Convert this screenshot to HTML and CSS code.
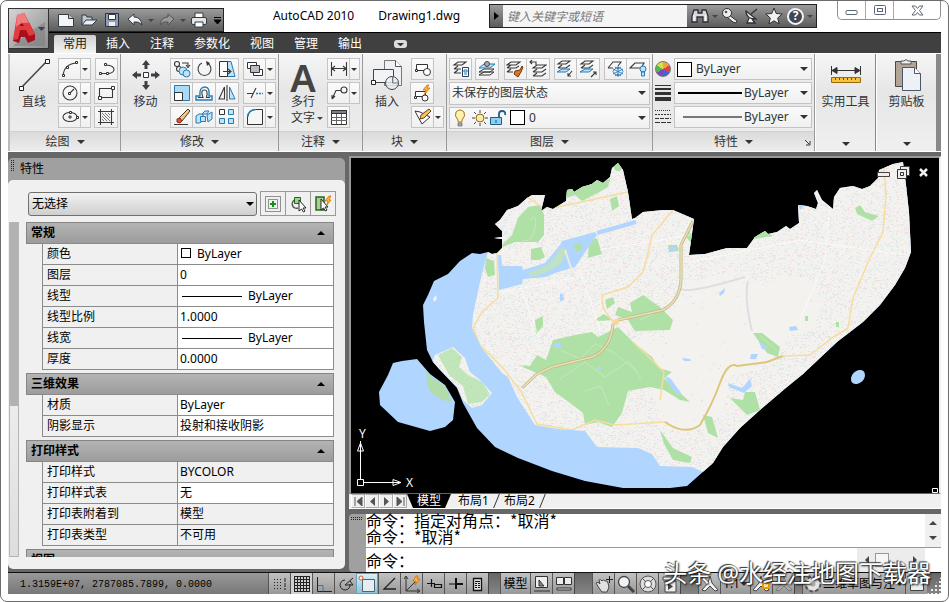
FILE: index.html
```
<!DOCTYPE html>
<html lang="zh-CN">
<head>
    <meta charset="UTF-8">
    <meta name="viewport" content="width=device-width, initial-scale=1.0">
    <title>AutoCAD 2010 Drawing1.dwg</title>
    <link rel="stylesheet" href="styles.css">
</head>
<body>
<div class="window">
    <header class="titlebar">
        <button class="app-button" aria-label="应用程序菜单">
            <svg width="38" height="38" viewBox="0 0 38 38">
                <path d="M6 34 L20 22 L36 12 V36 H4z" fill="#777" opacity=".5"/>
                <path d="M9 6 L15 3 L26 24 L26 30 L19 33 L16 27 H12 L10 33 L4 31z" fill="#a5121d"/>
                <path d="M8 5 L15 3 L26 24 L20 26 L17 20 H11 L9 29 L4 30z" fill="#e33b40"/>
                <path d="M12 11 L15 16 H11z" fill="#8d1019"/>
                <path d="M8 5 L15 3 L20 13 Q12 12 7 17z" fill="#f79a98" opacity=".7"/>
                <path d="M29 17 h7 l-3.500 4z" fill="#3c4254"/>
            </svg>
        </button>
        <div class="quick-access">
            <button aria-label="新建"><svg width="18" height="18" viewBox="0 0 18 18"><path d="M1.500 3.500h10l5 4v8h-15z" fill="#f4f4f4" stroke="#333b48"/><path d="M11.500 3.500v4h5" fill="#ccc" stroke="#333b48"/></svg></button>
            <button aria-label="打开"><svg width="18" height="18" viewBox="0 0 18 18"><path d="M2 14V4h4l1 2h5v3" fill="#c3cad3" stroke="#333b48"/><path d="M2 14l4-5h11l-5 5z" fill="#eceff2" stroke="#333b48"/></svg></button>
            <button aria-label="保存"><svg width="18" height="18" viewBox="0 0 18 18"><path d="M2.500 2.500h13v13h-13z" fill="#8e9cb0" stroke="#2b3444"/><path d="M5.500 3.500h7v5h-7z" fill="#fff" stroke="#2b3444"/><path d="M6 11h6v4H6z" fill="#eee"/></svg></button>
            <button aria-label="放弃"><svg width="18" height="18" viewBox="0 0 18 18"><path d="M2 8l6-5v3q7 0 8 8-3-4-8-3v3z" fill="#f4f4f4" stroke="#333b48"/></svg></button>
            <i class="mini"></i>
            <button aria-label="重做"><svg width="18" height="18" viewBox="0 0 18 18"><path d="M16 8l-6-5v3q-7 0-8 8 3-4 8-3v3z" fill="#999" stroke="#555"/></svg></button>
            <i class="mini"></i>
            <button aria-label="打印"><svg width="18" height="18" viewBox="0 0 18 18"><path d="M5 6V2h8v4" fill="#fff" stroke="#333b48"/><rect x="1.500" y="6.500" width="15" height="7" rx="1.500" fill="#e5e5e5" stroke="#333b48"/><path d="M5 11h8v5H5z" fill="#fff" stroke="#333b48"/></svg></button>
            <svg width="9" height="9" viewBox="0 0 9 9"><path d="M1 1.500h7M1 4h7L4.500 8z" fill="#000" stroke="#000"/></svg>
        </div>
        <h1><span>AutoCAD 2010</span><span>Drawing1.dwg</span></h1>
        <div class="info-center">
            <button class="expand" aria-label="展开"><svg width="5" height="8" viewBox="0 0 5 8"><path d="M0 0v8l5-4z" fill="#000"/></svg></button>
            <input type="text" aria-label="搜索" placeholder="键入关键字或短语">
            <button aria-label="搜索"><svg width="18" height="18" viewBox="0 0 18 18"><path d="M3 3h4v3h4V3h4l2 6v6h-5v-5H6v5H1V9z" fill="#d9d9d9" stroke="#2c2f38" stroke-width="1.300"/><path d="M3 8v6M14.500 8v6" stroke="#fff"/></svg></button>
            <i class="mini"></i>
            <button aria-label="速博中心"><svg width="18" height="18" viewBox="0 0 18 18"><path d="M8 8l8 6-1 2-3-1-6-5" fill="#f2f2f2" stroke="#2c2f38"/><circle cx="6" cy="6" r="4.500" fill="#eee" stroke="#2c2f38"/><circle cx="5" cy="5" r="1.300" fill="#555"/></svg></button>
            <button aria-label="通讯中心"><svg width="18" height="18" viewBox="0 0 18 18"><path d="M3 4q0 8 10 8L3 4zM6 11l-2 5h8l-3-4M8 7l6-5" fill="#f2f2f2" stroke="#2c2f38" stroke-width="1.300"/></svg></button>
            <button aria-label="收藏夹"><svg width="18" height="18" viewBox="0 0 18 18"><path d="M9 1l2.200 5.500 6 .5-4.500 4 1.400 6L9 13.800 3.900 17l1.400-6L.8 7l6-.5z" fill="#f2f2f2" stroke="#2c2f38"/></svg></button>
            <button class="help" aria-label="帮助">?</button>
            <i class="mini"></i>
        </div>
        <div class="window-buttons">
            <button aria-label="最小化"><svg width="13" height="13" viewBox="0 0 13 13"><rect x="1" y="6.500" width="11" height="4" rx="1" fill="#fff" stroke="#5c6573"/></svg></button>
            <button aria-label="最大化"><svg width="13" height="13" viewBox="0 0 13 13"><rect x="1.500" y="1.500" width="11" height="9" rx="1" fill="#fff" stroke="#5c6573"/><rect x="4.500" y="4.500" width="5" height="3" fill="none" stroke="#5c6573"/></svg></button>
            <button class="close" aria-label="关闭"><svg width="13" height="13" viewBox="0 0 13 13"><path d="M1 2h3.500L6.500 4.500 8.500 2H12L8.500 6.500 12 11H8.500L6.500 8.500 4.500 11H1l3.500-4.500z" fill="#fff" stroke="#5c6573"/></svg></button>
        </div>
    </header>

    <nav class="ribbon-tabs">
        <button class="active">常用</button>
        <button>插入</button>
        <button>注释</button>
        <button>参数化</button>
        <button>视图</button>
        <button>管理</button>
        <button>输出</button>
        <button class="collapse" aria-label="最小化功能区"></button>
    </nav>

    <section class="ribbon">
        <div class="panel draw">
            <div class="panel-body">
                <button class="big"><svg width="34" height="34" viewBox="0 0 34 34"><path d="M4 30L30 3" stroke="#444" stroke-width="1.500"/><path d="M2.500 28.500h4v4h-4zM28.500 1.500h4v4h-4z" fill="#fff" stroke="#222"/></svg>直线</button>
                <div class="tools">
                    <div class="row"><button class="tool" aria-label="圆弧"><svg viewBox="0 0 18 18"><path d="M2 16Q3 4 15 3" class="ln"/><path d="M1.500 14.500h2v2h-2zM5.500 6.500h2v2h-2zM14.500 1.500h2v2h-2z" class="nd"/></svg></button><button class="drop" aria-label="更多"></button></div>
                    <div class="row"><button class="tool" aria-label="圆"><svg viewBox="0 0 18 18"><circle cx="9" cy="9" r="7" class="ln"/><path d="M9 9l4-4" class="ln"/><path d="M7.500 8.500h2v2h-2z" class="nd"/></svg></button><button class="drop" aria-label="更多"></button></div>
                    <div class="row"><button class="tool" aria-label="椭圆"><svg viewBox="0 0 18 18"><ellipse cx="9" cy="9" rx="7" ry="4.500" class="ln"/><path d="M9 7v4M7 9h4M15.500 8.500h2v2h-2zM8.500 3.500h2v2h-2z" class="nd"/></svg></button><button class="drop" aria-label="更多"></button></div>
                </div>
                <div class="tools">
                    <button class="tool" aria-label="多段线"><svg viewBox="0 0 18 18"><path d="M2 13.500h9q5-1 5-4 0-4-8-4.500" class="ln"/><path d="M1.500 12.500h2v2h-2zM8.500 12.500h2v2h-2zM6.500 3.500h2v2h-2z" class="nd"/></svg></button>
                    <button class="tool" aria-label="矩形"><svg viewBox="0 0 18 18"><path d="M2.500 4.500h13v9h-13z" class="ln"/><path d="M1.500 12.500h3v3h-3zM14.500 2.500h3v3h-3z" class="nd"/></svg></button>
                    <button class="tool" aria-label="图案填充"><svg viewBox="0 0 18 18"><path d="M1 3.500h16M3.500 1v16M1 14.500h16M14.500 1v16" class="ln"/><path d="M5 5l8 8M5 8l5 5M8 5l5 5M5 11l2 2M11 5l2 2" stroke="#555" stroke-width=".8"/></svg></button>
                </div>
            </div>
            <button class="panel-title">绘图<i></i></button>
        </div>

        <div class="panel modify">
            <div class="panel-body">
                <button class="big"><svg width="34" height="34" viewBox="0 0 34 34"><path d="M17 2l4 5h-2.500v4h-3V7H13zM17 32l4-5h-2.500v-4h-3v4H13zM3 17l5-4v2.500h4v3H8V21zM31 17l-5-4v2.500h-4v3h4V21z" fill="#3d3f45"/><path d="M14.500 14.500h5v5h-5z" fill="#fff" stroke="#333"/></svg>移动</button>
                <div class="tools">
                    <div class="row">
                        <button class="tool" aria-label="复制"><svg viewBox="0 0 18 18"><circle cx="4" cy="4" r="2.500" class="ln"/><circle cx="6" cy="9" r="2.500" class="ln"/><circle cx="10" cy="11" r="4" class="bf"/><circle cx="13.500" cy="13.500" r="3.500" class="bf"/><path d="M9 3h6v3M13 5l2 2.500L17 5" class="ln"/></svg></button>
                        <button class="tool" aria-label="旋转"><svg viewBox="0 0 18 18"><path d="M7 3a6.500 6.500 0 1 0 5 0" class="ln" stroke-width="1.600"/><path d="M11 1l4 2-3 3z" fill="#333"/></svg></button>
                        <button class="tool" aria-label="拉伸"><svg viewBox="0 0 18 18"><path d="M9 1.500h4l4 15H9z" class="bf"/><path d="M1.500 1.500h8v15h-8z" class="nd"/><path d="M5 11.500h7M10 9l3 2.500-3 2.500" class="ln"/></svg></button>
                    </div>
                    <div class="row">
                        <button class="tool" aria-label="缩放"><svg viewBox="0 0 18 18"><path d="M1.500 1.500h15v15h-15z" fill="#a9dcf7" stroke="#277bb2"/><path d="M1.500 8.500h8v8h-8z" class="nd"/></svg></button>
                        <button class="tool" aria-label="偏移"><svg viewBox="0 0 18 18"><path d="M1 16v-4h4q-1-9 5-9 5 0 4 9h3v4z" fill="none" stroke="#277bb2" stroke-width="1.400"/><path d="M3 13.500h5Q5 6 9.500 6q4 0 2 7.500H15" class="ln"/></svg></button>
                        <button class="tool" aria-label="镜像"><svg viewBox="0 0 18 18"><path d="M6.500 3v12H1z" class="ln"/><path d="M11.500 3v12H17z" class="bf"/><path d="M9 1v16" class="ln"/></svg></button>
                    </div>
                    <div class="row">
                        <button class="tool" aria-label="删除"><svg viewBox="0 0 18 18"><path d="M6 10l9-9 2 2-8 10z" fill="#e9c98c" stroke="#50341c"/><path d="M4 11l3-1 2 3-2 2-3-1z" fill="#dc5a2b" stroke="#8a2b12"/><path d="M1 16.500h14" class="ln"/></svg></button>
                        <button class="tool" aria-label="分解"><svg viewBox="0 0 18 18"><path d="M1 8l3-2h4v6l-3 3H1zM7 6l3-3h4l-2 3zM12 7l5-3v7l-4 3z" class="bf"/><path d="M5.500 8.500h5v5h-5z" class="bf"/></svg></button>
                        <button class="tool" aria-label="阵列"><svg viewBox="0 0 18 18"><path d="M1.500 1.500h5v5h-5z" class="nd"/><path d="M10.500 1.500h5v5h-5zM1.500 10.500h5v5h-5zM10.500 10.500h5v5h-5z" class="bf"/></svg></button>
                    </div>
                </div>
                <div class="tools">
                    <div class="row"><button class="tool" aria-label="绘图次序"><svg viewBox="0 0 18 18"><path d="M1.500 2.500h9v6h-9z" class="nd"/><path d="M7.500 9.500h9v6h-9z" class="nd"/><path d="M4.500 5.500h9v7h-9z" fill="#b9bec6" stroke="#333"/></svg></button><button class="drop" aria-label="更多"></button></div>
                    <div class="row"><button class="tool" aria-label="修剪"><svg viewBox="0 0 18 18"><path d="M1 9.500h6M5 14l5-10" class="ln"/><path d="M10 9.500h7" stroke="#277bb2" stroke-width="1.500" stroke-dasharray="2 1"/></svg></button><button class="drop" aria-label="更多"></button></div>
                    <div class="row"><button class="tool" aria-label="圆角"><svg viewBox="0 0 18 18"><path d="M1.500 16.500V9q1-7 8-7.500h7v15z" fill="#f6f6f6" stroke="#333"/><path d="M1.500 9q1-7 8-7.500" fill="none" stroke="#277bb2" stroke-width="1.500"/></svg></button><button class="drop" aria-label="更多"></button></div>
                </div>
            </div>
            <button class="panel-title">修改<i></i></button>
        </div>

        <div class="panel annotate">
            <div class="panel-body">
                <button class="big"><span class="letter">A</span><span>多行</span><span class="with-arrow">文字<i class="mini"></i></span></button>
                <div class="tools">
                    <div class="row"><button class="tool" aria-label="线性标注"><svg viewBox="0 0 18 18"><path d="M1.500 2v14M16.500 2v14M2 8.500h14M5 6L2 8.500 5 11M13 6l3 2.500-3 2.500" class="ln"/></svg></button><button class="drop" aria-label="更多"></button></div>
                    <div class="row"><button class="tool" aria-label="引线"><svg viewBox="0 0 18 18"><path d="M2 15L6 6.500h5M2 15l0-4M2 15l3-3" class="ln"/><circle cx="14" cy="6" r="3" class="ln"/></svg></button><button class="drop" aria-label="更多"></button></div>
                    <button class="tool" aria-label="表格"><svg viewBox="0 0 18 18"><path d="M1.500 2.500h15v14h-15z" class="nd"/><path d="M1.500 2.500h15v3h-15z" fill="#7a808a" stroke="#333"/><path d="M1 9.500h16M1 12.500h16M6.500 6v10M11.500 6v10" stroke="#666"/></svg></button>
                </div>
            </div>
            <button class="panel-title">注释<i></i></button>
        </div>

        <div class="panel block">
            <div class="panel-body">
                <button class="big"><svg width="34" height="34" viewBox="0 0 34 34"><path d="M14.500 2.500h11l6 6v19h-17z" fill="#edf0f4" stroke="#777"/><path d="M25.500 2.500v6h6" fill="#fff" stroke="#555"/><path d="M3.500 11.500h20v13h-20z" fill="#f1f4f7" stroke="#444"/><path d="M1.500 22.500h4v4h-4z" fill="#fff" stroke="#222"/><circle cx="22" cy="25" r="6.500" fill="#e9edf2" fill-opacity=".8" stroke="#444"/><path d="M22.500 18v7h6" stroke="#777" fill="none"/></svg>插入</button>
                <div class="tools">
                    <button class="tool" aria-label="创建"><svg viewBox="0 0 18 18"><path d="M2.500 4.500h11v6h-11z" class="nd"/><path d="M1.500 9.500h2v2h-2z" class="nd"/><circle cx="13" cy="12" r="3.500" class="nd"/></svg></button>
                    <button class="tool" aria-label="块编辑器"><svg viewBox="0 0 18 18"><path d="M2.500 7.500h10v5h-10z" class="nd"/><path d="M1.500 12.500h2v2h-2z" class="nd"/><circle cx="12" cy="14" r="3" class="nd"/><path d="M14 1l-4 5h3l-2 5 6-7h-3l2-3z" fill="#ffb43a" stroke="#c76a00" stroke-width=".7"/></svg></button>
                    <div class="row"><button class="tool" aria-label="编辑属性"><svg viewBox="0 0 18 18"><path d="M1 3l5 1 10 5-8 7-5-9z" class="nd"/><path d="M6 11l1-4 8-6 2 2-7 7z" fill="#f6bf62" stroke="#69431b"/></svg></button><button class="drop" aria-label="更多"></button></div>
                </div>
            </div>
            <button class="panel-title">块<i></i></button>
        </div>

        <div class="panel layers">
            <div class="panel-body">
                <div class="tools wide">
                    <div class="row spread">
                        <button class="tool" aria-label="图层特性"><svg viewBox="0 0 18 18"><path d="M2 5l4-3h8l-4 3zM2 9l4-3M2 9h7M2 13l4-3M2 13h7" class="ln"/><path d="M10.500 7.500h6v9h-6z" fill="#fff" stroke="#28415c"/><path d="M12 10h3v2h-3zM12 14h3" stroke="#277bb2" fill="none"/></svg></button>
                        <button class="tool" aria-label="置为当前"><svg viewBox="0 0 18 18"><path d="M1 15l5-3h10l-4 3zM1 12l5-3h10l-4 3z" class="nd"/><path d="M1 8l5-4h11l-5 4z" class="bf"/><circle cx="9" cy="4" r="2.500" fill="#aaa" stroke="#444"/></svg></button>
                        <div class="row"><button class="tool" aria-label="匹配"><svg viewBox="0 0 18 18"><path d="M1 5l4-3h9l-4 3zM1 8l4-3M1 8h9l3-2M1 12l4-3M1 12h6" class="ln"/><path d="M9 11l5-1 2-4 1 1-2 5-3 5-4-3z" fill="#d6762b" stroke="#75370e"/></svg></button><button class="tool" aria-label="上一个"><svg viewBox="0 0 18 18"><path d="M4 8l4-3h9l-4 3zM4 12l4-3M4 12h9l4-3M4 16l4-3M4 16h9l4-3" class="ln"/><path d="M1 2h6v3M3 0L1 2l2 2" class="ln"/></svg></button></div>
                        <div class="row"><button class="tool" aria-label="隔离"><svg viewBox="0 0 18 18"><path d="M2 4l4-3h8l-4 3zM2 8l4-3M2 8h8l4-3" class="ln"/><path d="M1 12l5-3h8l-4 3z" class="bf"/><path d="M16 11l-4 5M12 13v3h3" class="ln"/></svg></button><button class="tool" aria-label="取消隔离"><svg viewBox="0 0 18 18"><path d="M2 4l4-3h8l-4 3zM2 8l4-3M2 8h8l4-3" class="ln"/><path d="M1 12l5-3h8l-4 3z" class="bf"/><path d="M12 17l5-5M14 12h3v3" class="ln"/></svg></button></div>
                        <div class="row"><button class="tool" aria-label="冻结"><svg viewBox="0 0 18 18"><path d="M1 8l5-6h8l-3 4M1 8h5" class="ln"/><path d="M11 6v11M6 9l10 5M16 9L6 14M8 7l3 2 3-2M8 16l3-2 3 2M6 11.500l2-3 3-1 3 1 2 3-2 3-3 1-3-1z" fill="none" stroke="#277bb2" stroke-width=".9"/></svg></button><button class="tool" aria-label="关闭图层"><svg viewBox="0 0 18 18"><path d="M1 8l5-5h9l-3 5z" class="ln"/><circle cx="14" cy="9" r="3" class="bf"/><path d="M12.500 12h3v4h-3z" class="bf"/></svg></button></div>
                    </div>
                    <label class="field"><select aria-label="图层状态"><option>未保存的图层状态</option></select></label>
                    <label class="field">
                        <svg width="58" height="20" viewBox="0 0 58 20"><path d="M6 12q-4-4-2-8 4-4 8 0 2 4-2 8v2H6z" fill="#fff1ab" stroke="#9b7c28"/><path d="M6 15h4v3H6z" fill="#aaa" stroke="#666" stroke-width=".7"/><circle cx="28" cy="10" r="4" fill="#ffe9a0" stroke="#8a6a1f"/><path d="M28 2v3M28 15v3M20 10h3M33 10h3M22 4l2 2M32 14l2 2M34 4l-2 2M24 14l-2 2" stroke="#444"/><path d="M38.500 9.500h11v7h-11z" fill="#8fd0f2" stroke="#1d5d86"/><path d="M47 10V6q0-3 3-3 4 0 3 4" fill="none" stroke="#1d5d86" stroke-width="1.800"/><path d="M44 12v3" stroke="#1d5d86"/></svg>
                        <b class="swatch"></b>
                        <select aria-label="当前图层"><option>0</option></select>
                    </label>
                </div>
            </div>
            <button class="panel-title">图层<i></i></button>
        </div>

        <div class="panel properties">
            <div class="panel-body">
                <div class="tools wide">
                    <div class="row prop"><b class="wheel"></b><label class="field"><b class="swatch"></b><select aria-label="颜色"><option>ByLayer</option></select></label></div>
                    <div class="row prop"><svg width="16" height="18" viewBox="0 0 16 18"><path d="M0 1.500h16" stroke="#333"/><path d="M0 5h16" stroke="#333" stroke-width="2"/><path d="M0 9.500h16" stroke="#333" stroke-width="3"/><path d="M0 15h16" stroke="#333" stroke-width="4"/></svg><label class="field"><b class="line thick"></b><select aria-label="线宽"><option>ByLayer</option></select></label></div>
                    <div class="row prop"><svg width="16" height="18" viewBox="0 0 16 18"><path d="M0 2.500h16" stroke="#333" stroke-dasharray="1 1"/><path d="M0 6.500h16" stroke="#333" stroke-dasharray="2 1"/><path d="M0 10.500h16" stroke="#333" stroke-dasharray="4 1"/><path d="M0 14.500h16" stroke="#333" stroke-dasharray="5 1"/></svg><label class="field"><b class="line"></b><select aria-label="线型"><option>ByLayer</option></select></label></div>
                </div>
            </div>
            <button class="panel-title">特性<i></i><svg class="launcher" width="7" height="7" viewBox="0 0 7 7"><path d="M1 1l4 4M6 2v4H2" fill="none" stroke="#333"/></svg></button>
        </div>

        <button class="panel slim">
            <svg width="34" height="34" viewBox="0 0 34 34"><path d="M2.500 8v9M31.500 8v9M3 12.500h28M8 9.500l-5 3 5 3zM26 9.500l5 3-5 3z" fill="#333" stroke="#333"/><path d="M2.500 19.500h29v5h-29z" fill="#f5c33c" stroke="#9a6a0b"/><path d="M6.500 20v2M10.500 20v2M14.500 20v2M18.500 20v2M22.500 20v2M26.500 20v2" stroke="#704c05"/></svg>
            实用工具<i></i>
        </button>
        <button class="panel slim">
            <svg width="34" height="34" viewBox="0 0 34 34"><path d="M5.500 3.500h21v25h-21z" fill="#b3a596" stroke="#4f463e"/><path d="M11 6V3h3q2-3 4 0h3v3z" fill="#eee" stroke="#555"/><path d="M12.500 9.500h12l6 6v17h-18z" fill="#edf1f7" stroke="#4b5666"/><path d="M24.500 9.500v6h6" fill="#fff" stroke="#4b5666"/></svg>
            剪贴板<i></i>
        </button>
    </section>

    <main class="workspace">
        <aside class="palette">
            <h2><span class="grip"></span>特性</h2>
            <div class="palette-body">
                <div class="selection">
                    <div class="combo"><select aria-label="选择对象"><option>无选择</option></select></div>
                    <div class="pick">
                        <button aria-label="切换"><svg width="18" height="18" viewBox="0 0 18 18"><path d="M1.500 1.500h15v15h-15zM4.500 4.500h9v9h-9z" fill="none" stroke="#333" stroke-dasharray="1 1"/><path d="M9 6v6M6 9h6" stroke="#0b9418" stroke-width="2"/></svg></button>
                        <button aria-label="选择对象"><svg width="18" height="18" viewBox="0 0 18 18"><path d="M6 5a4 4 0 1 0 3 8" fill="none" stroke="#555" stroke-width="1.500"/><path d="M5.500 2.500h6v6h-6z" fill="#a8cf9a" stroke="#24681c"/><path d="M10 5v11l2.500-2 2 3 1.500-1-2-3h3z" fill="#fff" stroke="#222"/></svg></button>
                        <button aria-label="快速选择"><svg width="18" height="18" viewBox="0 0 18 18"><path d="M2 2h8v13H2z" fill="#a8cf9a" stroke="#24681c" stroke-width="1.500"/><path d="M7 4v11l2.500-2 2 3 1.500-1-2-3h3z" fill="#fff" stroke="#222"/><path d="M15 1l-4 5h3l-1 4 4-5h-2l2-4z" fill="#ffb43a" stroke="#d06a00" stroke-width=".7"/></svg></button>
                    </div>
                </div>
                <div class="palette-scroll">
                    <div class="track"></div>
                    <div class="groups">
                        <h3>常规<i></i></h3>
                        <table>
                            <tr><th>颜色</th><td><b class="swatch small"></b>ByLayer</td></tr>
                            <tr><th>图层</th><td>0</td></tr>
                            <tr><th>线型</th><td><b class="line sample"></b>ByLayer</td></tr>
                            <tr><th>线型比例</th><td>1.0000</td></tr>
                            <tr><th>线宽</th><td><b class="line sample"></b>ByLayer</td></tr>
                            <tr><th>厚度</th><td>0.0000</td></tr>
                        </table>
                        <h3>三维效果<i></i></h3>
                        <table>
                            <tr><th>材质</th><td>ByLayer</td></tr>
                            <tr><th>阴影显示</th><td>投射和接收阴影</td></tr>
                        </table>
                        <h3>打印样式<i></i></h3>
                        <table>
                            <tr><th>打印样式</th><td class="locked">BYCOLOR</td></tr>
                            <tr><th>打印样式表</th><td>无</td></tr>
                            <tr><th>打印表附着到</th><td class="locked">模型</td></tr>
                            <tr><th>打印表类型</th><td class="locked">不可用</td></tr>
                        </table>
                        <h3>视图</h3>
                    </div>
                </div>
            </div>
        </aside>

        <div class="document">
            <div class="drawing">
                <svg class="map" viewBox="351 158 588 335" role="img" aria-label="地图">
                    <defs>
                        <clipPath id="area"><path d="M472 253L480 254 488 252 492 254 497 253 502 248 502 239 494 238 502 237 502 231 495 224 500 220 507 210 518 206 527 198 532 195 545 195 541 211 547 207 553 209 566 201 567 190 572 189 574 192 582 187 592 184 597 180 603 183 610 177 612 168 618 163 623 170 628 192 632 219 635 218 643 212 663 210 673 210 694 219 689 255 705 254 727 248 747 248 755 237 765 231 768 234 777 232 786 226 790 229 799 223 798 205 807 206 816 209 818 203 814 193 817 190 822 200 833 209 834 197 840 188 853 186 862 189 870 186 878 178 879 170 893 164 903 162 906 185 909 212 911 252 905 268 895 285 880 305 863 322 837 342 803 374 787 387 760 410 740 428 723 447 713 463 687 486 670 488 623 488 585 481 552 471 518 458 495 447 477 428 463 403 457 388 440 370 433 362 427 350 424 322 423 305 428 295 434 281 448 274 460 261z"/></clipPath>
                        <clipPath id="ground"><path d="M488 252L487 255 480 282 473 315 472 328 482 348 502 373 508 377 517 397 535 425 558 429 585 431 597 447 638 448 652 454 660 466 692 467 703 472 930 400 930 158 480 158zM435 355L453 347 465 358 470 372 480 380 492 393 482 405 472 408 463 400 457 387 440 370 432 362z"/></clipPath>
                    </defs>
                    <path d="M388 375L393 363 402 361 417 359 430 374 445 385 455 402 453 420 445 427 430 431 398 422 380 405 379 392z" fill="#b0d5ff"/>
                    <path d="M426 371L432 378 445 386 452 402 442 400 430 392 427 382z" fill="#b2dca9"/>
                    <g clip-path="url(#area)">
                        <path d="M351 158h588v335H351z" fill="#b0d5ff"/>
                        <g clip-path="url(#ground)">
                            <path d="M351 158h588v335H351z" fill="#f3f2ef"/>
                            <g id="specks" opacity=".75"></g>
                            <g fill="#afe1a7">
                                <path d="M502 245L512 235 518 218 528 207 540 205 544 215 544 235 538 242 515 242 503 247z"/>
                                <path d="M566 188L600 179 610 178 608 187 598 193 582 201 575 195 566 198z"/>
                                <circle cx="618" cy="167" r="4"/>
                                <path d="M531 249l10-2 4 10-6 3h-8zM589 240l8-2 5 16-14 4zM610 199l7-3 2 10-7 5zM486 258l8 3 1 14-7 2-3-8zM753 237l12-6 8 5-18 3zM855 208l5-3 5 7 14 4-7 5-15-7zM689 231l3 5-1 7-5-6zM668 245l9 0 2 6-10 1z"/>
                                <path d="M618 307L632 312 630 303 643 295 660 307 673 320 670 330 635 331 628 320 615 315zM605 300l8-3 2 6-8 6zM596 319l8-5 9 6-15 1z"/>
                                <path d="M518 365L530 366 537 355 546 360 553 340 575 335 592 332 598 337 618 327 633 342 652 357 659 368 672 372 664 378 690 402 680 400 664 390 650 387 628 391 622 413 612 427 598 422 585 425 583 413 570 403 555 392 546 377z"/>
                                <path d="M753 333L762 333 780 347 778 357 767 353zM730 398L743 400 745 392 755 392 760 410 747 415zM703 415L712 417 718 438 708 433zM660 430L673 448 692 457 690 463 673 460 664 444zM535 320l8-4v10l-7 8zM836 322h3v5h-3zM805 316h3v5h-3z"/>
                                <path d="M438 355l14-7 10 9-3 10 9 8 14 7 8 12-8 8-14 2-5-18-14-11z" opacity=".75"/>
                            </g>
                            <g fill="none" stroke="#cdebc3" stroke-width="1" opacity=".7">
                                <path d="M530 220q8-8 5 8t-13 12M560 350l20 9 15-15 18 8 25 20M560 379l25-17 20 15 24-16 12 18M585 391l16-5 8 19M760 336l16 14M640 320l18-9"/>
                            </g>
                            <g fill="#b0d5ff">
                                <path d="M498 255L501 255 502 266 522 266 523 270 545 263 560 245 562 241 595 232 597 235 590 245 575 267 558 272 545 277 523 279 522 284 499 290z"/>
                                <path d="M798 205h7l-5 5zM719 293l6-5-1 5-4 3zM759 342l6 3 2 5-5-1zM751 354l7 0-2 5-6 0zM668 248l6-2 3 3-6 3zM664 375l7 4 10 14-3 2-8-9zM789 327l7-1 2 4-8 1zM728 383l14 5 8-9 2 7-8 7-15-6zM553 344l7-2 2 6-7 0zM597 366l6 2-5 2zM560 294l3 0 1 6-4 1zM682 358l8 1 1 2-7 0z"/>
                            </g>
                            <path d="M597 233L636 222" stroke="#b0d5ff" stroke-width="4"/>
                            <path d="M528 273L548 265 562 247 567 249 562 263 545 273 531 277z" fill="#bfe2c4"/>
                            <circle cx="578" cy="247" r="4" fill="#afe1a7"/>
                            <path d="M565 250L574 277" stroke="#e9ecdf" stroke-width="2"/>
                            <circle cx="604" cy="220" r="4" fill="#f3f2ef"/>
                            <g class="streets">
                                <path d="M502 292L560 281 575 277M600 250L690 235M520 285L540 340 520 370M580 270L600 330M690 262L800 240 905 255M830 200L825 260 800 320"/>
                            </g>
                            <g fill="none" stroke="#f6dc9f" stroke-width="1.500">
                                <path d="M497 253L498 298 482 312 473 328 480 345 503 368 522 393 537 424 572 430 595 420 615 425 665 422"/>
                                <path d="M673 210L652 235 647 258 643 272 628 287 602 295 603 308 613 322"/>
                                <path d="M527 197L542 207M553 208L628 192M633 342L652 360 664 372 660 400"/>
                                <path d="M783 356L810 355 832 338 848 328 853 298 870 258 883 232 886 195 884 168"/>
                            </g>
                            <path d="M665 422Q685 436 700 425Q712 405 720 383T737 366L767 362 783 356" fill="none" stroke="#dbc77c" stroke-width="2"/>
                            <path d="M681 289Q688 294 745 277M748 281q-4 18 4 50" fill="none" stroke="#dedde2" stroke-width="2"/>
                            <path d="M522 388L537 374 552 367 592 357Q610 350 613 325L618 320 663 310Q681 300 681 278V245L693 221" fill="none" stroke="#cdb47c" stroke-width="3"/>
                            <path d="M522 388L537 374 552 367 592 357Q610 350 613 325L618 320 663 310Q681 300 681 278V245L693 221" fill="none" stroke="#dfe3c0" stroke-width="1.500"/>
                            <circle cx="616" cy="322" r="3" fill="#f4d99a"/>
                        </g>
                        <path d="M433 299l3-4 1 4-3 3z" fill="#f3f2ef"/>
                    </g>
                    <ellipse cx="858" cy="377" rx="6" ry="8" transform="rotate(45 858 377)" fill="#b0d5ff"/>
                    <g class="ucs">
                        <path d="M357.500 479.500h6v6h-6zM360.500 479V441M364 482.500h37M360.500 443l-3 8h6zM401 482.500l-8-3v6z"/>
                        <text x="359" y="438">Y</text>
                        <text x="406" y="487">X</text>
                    </g>
                    <path d="M932.500 488.500h5v4h-5z" fill="#000" stroke="#fff"/>
                </svg>
                <div class="doc-buttons">
                    <button aria-label="最小化"><svg width="13" height="13" viewBox="0 0 13 13"><path d="M.5 6.500h12v4H.5z" fill="#eee" stroke="#444"/></svg></button>
                    <button aria-label="还原"><svg width="13" height="13" viewBox="0 0 13 13"><path d="M3.500.5h9v9h-9z" fill="#eee" stroke="#444"/><path d="M.5 3.500h9v9h-9z" fill="#eee" stroke="#333"/><path d="M3.500 6.500h3v3h-3z" fill="none" stroke="#333"/></svg></button>
                    <button aria-label="关闭"><svg width="13" height="13" viewBox="0 0 13 13"><path d="M3 3l7 7M10 3l-7 7" stroke="#eee" stroke-width="2.500"/></svg></button>
                </div>
            </div>
            <div class="layout-tabs">
                <button class="nav" aria-label="第一个"><svg width="9" height="9" viewBox="0 0 9 9"><path d="M1 0v9M8 0v9L3 4.500z" fill="#555" stroke="#555"/></svg></button>
                <button class="nav" aria-label="上一个"><svg width="9" height="9" viewBox="0 0 9 9"><path d="M7 0v9L2 4.500z" fill="#555"/></svg></button>
                <button class="nav" aria-label="下一个"><svg width="9" height="9" viewBox="0 0 9 9"><path d="M2 0v9l5-4.500z" fill="#555"/></svg></button>
                <button class="nav" aria-label="最后一个"><svg width="9" height="9" viewBox="0 0 9 9"><path d="M8 0v9M1 0v9l5-4.500z" fill="#555" stroke="#555"/></svg></button>
                <button class="sheet active">模型</button>
                <button class="sheet">布局1</button>
                <button class="sheet">布局2</button>
            </div>
            <div class="command">
                <div class="command-grip"><span class="grip flat"></span></div>
                <div class="command-main">
                    <div class="history">
                        <p>命令：指定对角点：*取消*<br>命令：*取消*</p>
                        <div class="vbar"><i class="up"></i><i></i></div>
                    </div>
                    <div class="prompt">
                        <label for="cmd">命令：</label>
                        <input id="cmd" type="text">
                        <div class="hbar"><i class="left"></i><span></span><i class="right"></i></div>
                    </div>
                </div>
            </div>
        </div>
    </main>

    <footer class="statusbar">
        <div class="coords">1.3159E+07, 2787085.7899, 0.0000</div>
        <button aria-label="捕捉"><svg viewBox="0 0 18 18"><path d="M3 4.500h9M3 7.500h9M3 10.500h9M3 13.500h9" stroke="#222" stroke-dasharray="1 2"/><path d="M14 3v12" stroke="#222" stroke-dasharray="4 1"/></svg></button>
        <button class="lit" aria-label="栅格"><svg viewBox="0 0 18 18"><path d="M1.500 1v16M4.500 1v16M7.500 1v16M10.500 1v16M13.500 1v16M16.500 1v16M1 1.500h16M1 4.500h16M1 7.500h16M1 10.500h16M1 13.500h16M1 16.500h16" stroke="#222"/></svg></button>
        <button aria-label="正交"><svg viewBox="0 0 18 18"><path d="M2.500 2v14.500H17" stroke="#222" fill="none"/><path d="M3 10.500h5v6" stroke="#4a7191" fill="none"/></svg></button>
        <button aria-label="极轴"><svg viewBox="0 0 18 18"><path d="M13 9a5 5 0 1 1-5-4M8 10l8-7M8 10h8l-3-4" stroke="#222" fill="none"/></svg></button>
        <button class="on" aria-label="对象捕捉"><svg viewBox="0 0 18 18"><path d="M4.500 4.500h12v12h-12z" fill="#e6edf1" stroke="#55616c"/><circle cx="3" cy="3" r="2" fill="#fff" stroke="#e2581b"/></svg></button>
        <button aria-label="对象追踪"><svg viewBox="0 0 18 18"><path d="M14 3L3 14h12" stroke="#222" stroke-width="1.300" fill="none"/></svg></button>
        <button aria-label="动态UCS"><svg viewBox="0 0 18 18"><path d="M3 2v14h13M3 16L12 7M1 4l2-3 2 3M14 14l3 2-3 2" stroke="#333" fill="none"/><path d="M13 1l-3 5h3l-1 4 5-6h-3l1-3z" fill="#ffb43a" stroke="#c86300" stroke-width=".7"/></svg></button>
        <button aria-label="动态输入"><svg viewBox="0 0 18 18"><path d="M2 8.500h8M6.500 4v8M9.500 9.500h7v3h-7z" stroke="#111" fill="none" stroke-width="1.200"/></svg></button>
        <button aria-label="线宽"><svg viewBox="0 0 18 18"><path d="M2 9h7" stroke="#111"/><path d="M9 9h7M9 3v11" stroke="#111" stroke-width="2"/></svg></button>
        <button aria-label="快捷特性"><svg viewBox="0 0 18 18"><path d="M4.500 3.500h8v12h-8z" fill="#ddd" stroke="#111" stroke-width="1.300"/><path d="M6 6.500h5M6 8.500h2M9 8.500h2M6 10.500h2M9 10.500h2M6 12.500h2M9 12.500h2" stroke="#111"/></svg></button>
        <span class="gap"></span>
        <button class="wide">模型</button>
        <button aria-label="快速查看布局"><svg viewBox="0 0 18 18"><path d="M2.500 1.500h12v11h-12zM1 16h16" fill="#eee" stroke="#333"/><path d="M6 5v6h5z" fill="#888" stroke="#333"/></svg></button>
        <button aria-label="快速查看图形"><svg viewBox="0 0 18 18"><path d="M1.500 2.500h7v7h-7zM9.500 2.500h7v7h-7z" fill="#eee" stroke="#333"/><path d="M2 13h14v2H2z" fill="#ddd" stroke="#333"/></svg></button>
        <span class="gap large"></span>
        <button aria-label="平移"><svg viewBox="0 0 18 18"><path d="M1 8q2-2 4 1l-1-4q2-1 3 1 1-2 3 0 2-1 3 2l1 4-2 5H7l-3-4z" fill="#e2e2e2" stroke="#444"/><path d="M14.500 1v7M11 4.500h7" stroke="#222"/></svg></button>
        <button aria-label="缩放"><svg viewBox="0 0 18 18"><path d="M11 11l6 6" stroke="#444" stroke-width="3"/><circle cx="7" cy="7" r="5.500" fill="#eef4f7" stroke="#444" stroke-width="1.300"/></svg></button>
        <button aria-label="控制盘"><svg viewBox="0 0 18 18"><circle cx="9" cy="9" r="8" fill="#ddd" stroke="#555"/><circle cx="9" cy="9" r="3.500" fill="#fff" stroke="#555"/><path d="M3 3l4 4M15 3l-4 4M3 15l4-4M15 15l-4-4" stroke="#555"/></svg></button>
        <button aria-label="ShowMotion"><svg viewBox="0 0 18 18"><path d="M2 2h10v3H2zM4 6h11v11H4z" fill="#eee" stroke="#444"/><path d="M7 8v7l5-3.500z" fill="#444"/></svg></button>
        <span class="gap large"></span>
        <button aria-label="注释比例"><svg viewBox="0 0 18 18"><path d="M9 1l2 7 6 7-3 1-5-5-5 5-3-1 6-7z" fill="#f4f4f4" stroke="#444"/></svg></button>
        <button class="wide">1:1<i></i></button>
        <button aria-label="注释可见性"><svg viewBox="0 0 18 18"><path d="M8 1l2 7 6 7-3 1-5-5-5 5-3-1 6-7z" fill="#f4f4f4" stroke="#444"/><rect x="10" y="8" width="6" height="5" rx="1" fill="#ffe9a8" stroke="#f09a00" stroke-width="2"/></svg></button>
        <button aria-label="自动缩放"><svg viewBox="0 0 18 18"><path d="M9 1l2 7 6 7-3 1-5-5-5 5-3-1 6-7z" fill="#aaa" stroke="#777"/></svg></button>
        <span class="gap small"></span>
        <button class="wide workspace-switch"><svg viewBox="0 0 18 18"><circle cx="9" cy="9" r="6.500" fill="none" stroke="#555" stroke-width="4" stroke-dasharray="3 2"/><circle cx="9" cy="9" r="4.500" fill="none" stroke="#e5e5e5" stroke-width="4"/></svg>二维草图与注<i></i></button>
        <button aria-label="全屏显示"><svg viewBox="0 0 18 18"><path d="M2.500 2.500h13v13h-13z" fill="#eee" stroke="#444"/></svg></button>
        <span class="resize"></span>
    </footer>
    <div class="watermark">头条 @水经注地图下载器</div>
</div>
<script src="map.js"></script>
</body>
</html>
```
FILE: styles.css
```
* {
    box-sizing: border-box;
}
body {
    margin: 0;
    background: #fff;
    font-family: "Noto Sans", "Noto Sans CJK SC", sans-serif;
    font-size: 12px;
    line-height: 16px;
    color: #000;
}
button, select, input {
    font: inherit;
    color: inherit;
    margin: 0;
    padding: 0;
    border: 0;
    border-radius: 0;
    background: none;
    appearance: none;
}
svg {
    display: block;
    flex: none;
}
.window {
    position: relative;
    display: flex;
    flex-direction: column;
    height: 100vh;
    min-height: 600px;
    padding: 0 7px 7px;
    border: 1px solid #6c6c6c;
    border-radius: 7px;
    background: #fff;
    overflow: hidden;
}

/* title bar */
.titlebar {
    display: flex;
    align-items: flex-start;
    height: 31px;
}
.app-button {
    position: relative;
    z-index: 2;
    width: 41px;
    height: 41px;
    margin-top: 7px;
    border: 1px solid #333;
    background: linear-gradient(135deg, #d5d5d5, #b4b4b4 45%, #8e8e8e);
}
.quick-access {
    display: flex;
    align-items: center;
    gap: 5px;
    width: 175px;
    height: 24px;
    margin-top: 7px;
    padding-left: 8px;
    border: 1px solid #222;
    border-left: 0;
    background: linear-gradient(#9b9b9b, #5c5c5c);
}
.mini {
    display: inline-block;
    flex: none;
    border: 3px solid transparent;
    border-top: 3px solid #444;
    border-bottom: 0;
}
.quick-access .mini {
    margin: 0 -1px;
}
.titlebar h1 {
    display: flex;
    justify-content: center;
    gap: 24px;
    flex: 1;
    margin: 7px 0 0;
    padding-left: 20px;
    font-size: 12px;
    font-weight: normal;
    line-height: 16px;
    white-space: nowrap;
}
.info-center {
    display: flex;
    align-items: center;
    width: 328px;
    height: 24px;
    margin-top: 3px;
    padding-right: 4px;
    gap: 4px;
    border: 1px solid #222;
    background: linear-gradient(#9b9b9b, #5c5c5c);
}
.info-center .expand {
    width: 9px;
    padding-left: 4px;
}
.info-center input {
    flex: 1;
    width: 0;
    height: 22px;
    padding-left: 4px;
    background: #f5f5f5;
}
.info-center input::placeholder {
    color: #777;
    font-style: italic;
    opacity: 1;
}
.info-center .mini {
    margin: 0 -1px;
}
.help {
    width: 17px;
    height: 17px;
    border: 2px solid #f2f2f2;
    border-radius: 50%;
    background: #404652;
    color: #fff;
    font-weight: bold;
    line-height: 12px;
}
.window-buttons {
    display: flex;
    margin-left: 20px;
    border: 1px solid #8f8f8f;
    border-top: 0;
    border-radius: 0 0 5px 5px;
}
.window-buttons button {
    display: grid;
    place-items: center;
    width: 28px;
    height: 18px;
    border-right: 1px solid #aaa;
}
.window-buttons .close {
    width: 46px;
    border-right: 0;
}

/* ribbon */
.ribbon-tabs {
    display: flex;
    align-items: flex-end;
    height: 21px;
    padding-left: 46px;
    border-top: 1px solid #000;
    background: #404040;
    color: #fff;
}
.ribbon-tabs button {
    height: 18px;
    padding: 0 10px;
    line-height: 18px;
}
.ribbon-tabs .active {
    padding: 0 9px;
    border-radius: 2px 2px 0 0;
    background: linear-gradient(#d0d0d0, #f4f4f4);
    color: #222;
}
.ribbon-tabs .collapse {
    width: 13px;
    height: 8px;
    margin: 0 0 5px 22px;
    padding: 0 3px;
    border-radius: 3px;
    background: #ddd;
}
.collapse::before {
    content: "";
    display: block;
    border: 3px solid transparent;
    border-top-color: #333;
    border-bottom: 0;
}
.ribbon {
    display: flex;
    height: 99px;
    padding-left: 2px;
    border-top: 1px solid #fff;
    border-bottom: 1px solid #fff;
    background: linear-gradient(90deg, #bbb, #888);
    color: #333;
}
.panel {
    display: flex;
    flex-direction: column;
    flex: none;
    border-right: 1px solid #999;
    background: linear-gradient(#f5f5f5, #e6e6e6 40%, #f0f0f0);
}
.draw { width: 111px; }
.modify { width: 158px; }
.annotate { width: 84px; }
.block { width: 84px; }
.layers { width: 206px; }
.properties { width: 162px; }
.panel-body {
    display: flex;
    flex: 1;
    gap: 4px;
    padding: 4px 2px 2px 0;
}
.panel-title {
    position: relative;
    display: flex;
    align-items: center;
    justify-content: center;
    gap: 7px;
    height: 20px;
    border-top: 1px solid #d0d0d0;
    background: linear-gradient(#dadada, #ededed);
}
.panel-title i, .slim i, .field::after, .statusbar i {
    border: 4px solid transparent;
    border-top-color: #333;
    border-bottom: 0;
}
.launcher {
    position: absolute;
    right: 3px;
    bottom: 5px;
}
.big {
    display: flex;
    flex-direction: column;
    align-items: center;
    justify-content: flex-start;
    flex: 1;
    margin-right: -4px;
}
.big svg {
    margin-bottom: 2px;
}
.letter {
    height: 36px;
    font-size: 38px;
    line-height: 38px;
    font-weight: 600;
    color: #444;
}
.with-arrow {
    display: flex;
    align-items: center;
    gap: 2px;
    margin-right: -8px;
}
.tools {
    display: flex;
    flex-direction: column;
    align-items: flex-start;
    gap: 2px;
}
.tools.wide {
    flex: 1;
    align-items: stretch;
    padding-left: 2px;
}
.row {
    display: flex;
}
.row.spread {
    justify-content: space-between;
}
.tool, .drop, .field {
    height: 22px;
    border: 1px solid #c4c4c4;
    background: linear-gradient(#fafafa, #f0f0f0);
}
.tool {
    display: grid;
    place-items: center;
    width: 23px;
}
.tool + .tool, .drop {
    margin-left: -1px;
    width: 24px;
}
.tool svg {
    width: 18px;
    height: 18px;
}
.row .drop {
    width: 11px;
    padding: 0 2px;
}
.drop::before {
    content: "";
    display: block;
    width: 0;
    border: 3px solid transparent;
    border-top-color: #333;
    border-bottom: 0;
    margin-left: -1px;
}
.ln {
    fill: none;
    stroke: #3a3a3a;
    stroke-width: 1.1;
}
.nd {
    fill: #fff;
    stroke: #333;
}
.bf {
    fill: #bfe3f8;
    stroke: #277bb2;
}
.field {
    display: flex;
    align-items: center;
    flex: 1;
    padding: 0 3px 0 2px;
}
.field select {
    flex: 1;
    min-width: 0;
}
.field::after {
    content: "";
}
.swatch {
    width: 15px;
    height: 15px;
    flex: none;
    margin-right: 4px;
    border: 1px solid #000;
    background: #fff;
}
.line {
    flex: 1;
    margin: 0 2px 0 6px;
    border-top: 2px solid #777;
}
.line.thick {
    margin-left: 1px;
    border-color: #000;
}
.prop {
    align-items: center;
    gap: 3px;
}
.line + select {
    flex: 0 0 56px;
}
.wheel {
    width: 16px;
    height: 16px;
    border: 1px solid #777;
    border-radius: 50%;
    background: conic-gradient(#f5a13c 0 60deg, #e33f3f 0 120deg, #4562d8 0 180deg, #7a46c4 0 240deg, #56b846 0 300deg, #d3e04c 0);
}
.slim {
    width: 61px;
    align-items: center;
    padding: 4px 0 5px;
    border-left: 1px solid #fff;
    border-right: 1px solid #888;
}
.slim svg {
    margin-bottom: 2px;
}
.slim i {
    margin-top: auto;
}

/* workspace */
.workspace {
    display: flex;
    flex: 1;
    min-height: 0;
    padding-top: 4px;
    background: #676767;
}
.palette {
    display: flex;
    flex-direction: column;
    flex: 0 0 337px;
    margin: 2px 4px 3px 0;
    border-radius: 5px;
    background: #a0a0a0;
    overflow: hidden;
}
.palette h2 {
    display: flex;
    align-items: center;
    gap: 5px;
    height: 22px;
    margin: 0;
    padding-left: 3px;
    font-size: 12px;
    font-weight: normal;
}
.grip {
    width: 4px;
    height: 12px;
    margin-bottom: 6px;
    background: radial-gradient(circle at 0 0, #222 1px, transparent 1px) 0 0 / 2px 2px;
}
.grip.flat {
    display: block;
    width: 12px;
    height: 4px;
}
.palette-body {
    display: flex;
    flex-direction: column;
    flex: 1;
    min-height: 0;
    padding: 11px 11px 12px 1px;
    border-radius: 5px;
    background: #f0f0f0;
}
.selection {
    display: flex;
    align-items: center;
    gap: 3px;
    padding: 0 0 6px 19px;
    margin-right: -2px;
}
.combo {
    position: relative;
    flex: 1;
}
.combo select {
    width: 100%;
    height: 24px;
    padding-left: 3px;
    border: 1px solid #707070;
    border-radius: 3px;
    background: linear-gradient(#f2f2f2, #cfcfcf);
}
.combo::after {
    content: "";
    position: absolute;
    right: 3px;
    top: 10px;
    border: 4px solid transparent;
    border-top-color: #000;
    border-bottom: 0;
}
.pick {
    display: flex;
}
.pick button {
    display: grid;
    place-items: center;
    width: 26px;
    height: 25px;
    margin-right: -1px;
    border: 1px solid #999;
}
.pick button:last-child {
    margin-right: 0;
}
.palette-scroll {
    display: flex;
    flex: 1;
    min-height: 0;
    gap: 7px;
}
.track {
    width: 10px;
    border: 1px solid #b5b5b5;
    background: linear-gradient(#b2b2b2 0 55%, #ececec 55%, #ddd);
}
.groups {
    flex: 1;
    overflow: hidden;
}
.groups h3 {
    display: flex;
    align-items: center;
    justify-content: space-between;
    height: 22px;
    margin: 0;
    padding: 0 8px 0 4px;
    border: 1px solid #858585;
    background: linear-gradient(#b4b4b4, #9c9c9c);
    font-size: 12px;
}
.groups h3 i {
    border: 4px solid transparent;
    border-bottom-color: #000;
    border-top: 0;
}
.groups table {
    width: calc(100% - 16px);
    margin: -1px 0 3px 16px;
    border-collapse: collapse;
    table-layout: fixed;
}
.groups tr {
    height: 21px;
}
.groups th, .groups td {
    padding: 0 0 0 4px;
    border: 1px solid #8b8b8b;
    font-weight: normal;
    text-align: left;
    line-height: 16px;
}
.groups th {
    width: 135px;
}
.groups td {
    padding-left: 2px;
    background: #fff;
}
.groups td.locked {
    background: #f0f0f0;
}
.swatch.small {
    display: inline-block;
    width: 10px;
    height: 10px;
    margin: 0 6px 0 1px;
}
.line.sample {
    display: inline-block;
    width: 60px;
    margin: 0 6px 0 2px;
    border-top: 1px solid #000;
    vertical-align: middle;
}

/* drawing window */
.document {
    display: flex;
    flex-direction: column;
    flex: 1;
    min-width: 0;
}
.drawing {
    position: relative;
    flex: 1;
    min-height: 0;
    border: 2px solid #999;
    border-bottom: 1px solid #666;
    border-right-color: #eee;
    background: #000;
}
.map {
    width: 100%;
    height: 100%;
}
.streets {
    fill: none;
    stroke: #fff;
    stroke-width: 1;
    opacity: .6;
}
.ucs {
    fill: none;
    stroke: #fff;
}
.ucs text {
    fill: #fff;
    stroke: none;
    font-size: 12px;
}
.doc-buttons {
    position: absolute;
    top: 8px;
    right: 9px;
    display: flex;
    gap: 7px;
}
.layout-tabs {
    display: flex;
    height: 15px;
    padding-left: 2px;
    border-bottom: 1px solid #fff;
    background: #f0f0f0;
}
.nav {
    display: grid;
    place-items: center;
    width: 14px;
    border: 1px solid #aaa;
    border-left-color: #fff;
}
.sheet {
    position: relative;
    padding: 0 8px 0 7px;
    line-height: 14px;
}
.sheet::after {
    content: "";
    position: absolute;
    top: 0;
    right: 0;
    height: 14px;
    border-right: 1px solid #333;
    transform: skewX(-22deg);
}
.sheet.active {
    padding: 0 10px;
    background: #000;
    color: #fff;
    clip-path: polygon(0 0, 100% 0, calc(100% - 6px) 100%, 6px 100%);
}
.command {
    display: flex;
    height: 58px;
    margin-top: 5px;
}
.command-grip {
    width: 17px;
    padding: 3px 2px;
    border-radius: 4px 0 0 4px;
    background: #a0a0a0;
}
.command-main {
    display: flex;
    flex-direction: column;
    flex: 1;
    min-width: 0;
    background: #fff;
    font-family: "Noto Sans CJK SC", sans-serif;
    font-size: 16px;
}
.history {
    display: flex;
    justify-content: space-between;
    height: 40px;
    border-bottom: 1px solid #999;
}
.history p {
    margin: -2px 0 0;
    line-height: 16px;
}
.vbar {
    display: flex;
    flex-direction: column;
    justify-content: space-between;
    width: 16px;
    padding: 7px 4px;
    background: #f0f0f0;
}
.vbar i, .hbar i {
    border: 4px solid transparent;
    border-top-color: #444;
    border-bottom: 0;
}
.vbar .up {
    border-top: 0;
    border-bottom: 4px solid #444;
}
.prompt {
    display: flex;
    align-items: center;
    flex: 1;
}
.prompt input {
    flex: 1;
    min-width: 0;
    outline: 0;
}
.hbar {
    display: flex;
    align-items: center;
    justify-content: space-between;
    width: 68px;
    height: 100%;
    margin-right: 16px;
    padding: 0 8px;
    background: #ececec;
}
.hbar span {
    width: 14px;
    height: 14px;
    margin-right: 18px;
    border: 1px solid #999;
    background: #f6f6f6;
}
.hbar .left {
    border: 4px solid transparent;
    border-right-color: #444;
    border-left: 0;
}
.hbar .right {
    border: 4px solid transparent;
    border-left-color: #444;
    border-right: 0;
}

/* status bar */
.statusbar {
    display: flex;
    height: 22px;
    border-top: 1px solid #111;
    background: linear-gradient(#666, #858585);
    overflow: hidden;
}
.coords {
    flex: 0 0 260px;
    padding-left: 12px;
    background: linear-gradient(#999, #777);
    font: 10px/24px "Liberation Mono", monospace;
}
.statusbar button {
    display: flex;
    align-items: center;
    justify-content: center;
    flex: 0 0 22px;
    border-left: 1px solid #555;
    background: linear-gradient(#c2c2c2, #989898);
    white-space: nowrap;
}
.statusbar svg {
    width: 18px;
    height: 18px;
}
.statusbar .lit {
    background: #d0d0d0;
}
.statusbar .on {
    border: 1px solid #6d9fb8;
    background: linear-gradient(#d9f0f7, #8ac6dc);
}
.statusbar .wide {
    flex-basis: 30px;
}
.statusbar .workspace-switch {
    flex: 1 0 102px;
    gap: 1px;
}
.gap {
    flex: 0 0 12px;
    border-left: 1px solid #444;
}
.gap.large {
    flex-basis: 18px;
}
.gap.small {
    flex-basis: 8px;
}
.resize {
    flex: 0 0 14px;
    background: radial-gradient(circle at 1px 1px, #eee 1px, transparent 1px) 0 0 / 4px 4px;
    clip-path: polygon(100% 20%, 100% 100%, 0 100%);
}
.watermark {
    position: absolute;
    right: 17px;
    bottom: 14px;
    color: #fff;
    font-size: 24px;
    line-height: 28px;
    text-shadow: 1px 1px 2px #000, -1px -1px 1px #333;
    white-space: nowrap;
    pointer-events: none;
}
```
FILE: map.js
```
// scatter small building marks over the built-up parts of the map
const colours = ['#dfe3ee', '#f4dada', '#d5ebf3', '#e2dcf0', '#dcdde0', '#eed9e2', '#d6e9dc'];
const bare = [
    [725, 325, 62, 50],
    [690, 385, 38, 45],
    [790, 305, 30, 30],
    [650, 350, 22, 14]
];
let seed = 7;

function random() {
    seed = (seed * 16807) % 2147483647;
    return seed / 2147483647;
}

function isBare(x, y) {
    return bare.some(([cx, cy, rx, ry]) => ((x - cx) / rx) ** 2 + ((y - cy) / ry) ** 2 < 1);
}

const paths = colours.map(() => '');
for (let i = 0; i < 26000; i++) {
    const x = 423 + Math.floor(random() * 490);
    const y = 160 + Math.floor(random() * 325);
    if (isBare(x, y) && random() > 0.04) continue;
    const w = random() > 0.7 ? 2 : 1;
    paths[i % colours.length] += `M${x} ${y}h${w}v1h-${w}z`;
}

const group = document.getElementById('specks');
paths.forEach((d, i) => {
    const path = document.createElementNS('http://www.w3.org/2000/svg', 'path');
    path.setAttribute('d', d);
    path.setAttribute('fill', colours[i]);
    group.appendChild(path);
});
```
